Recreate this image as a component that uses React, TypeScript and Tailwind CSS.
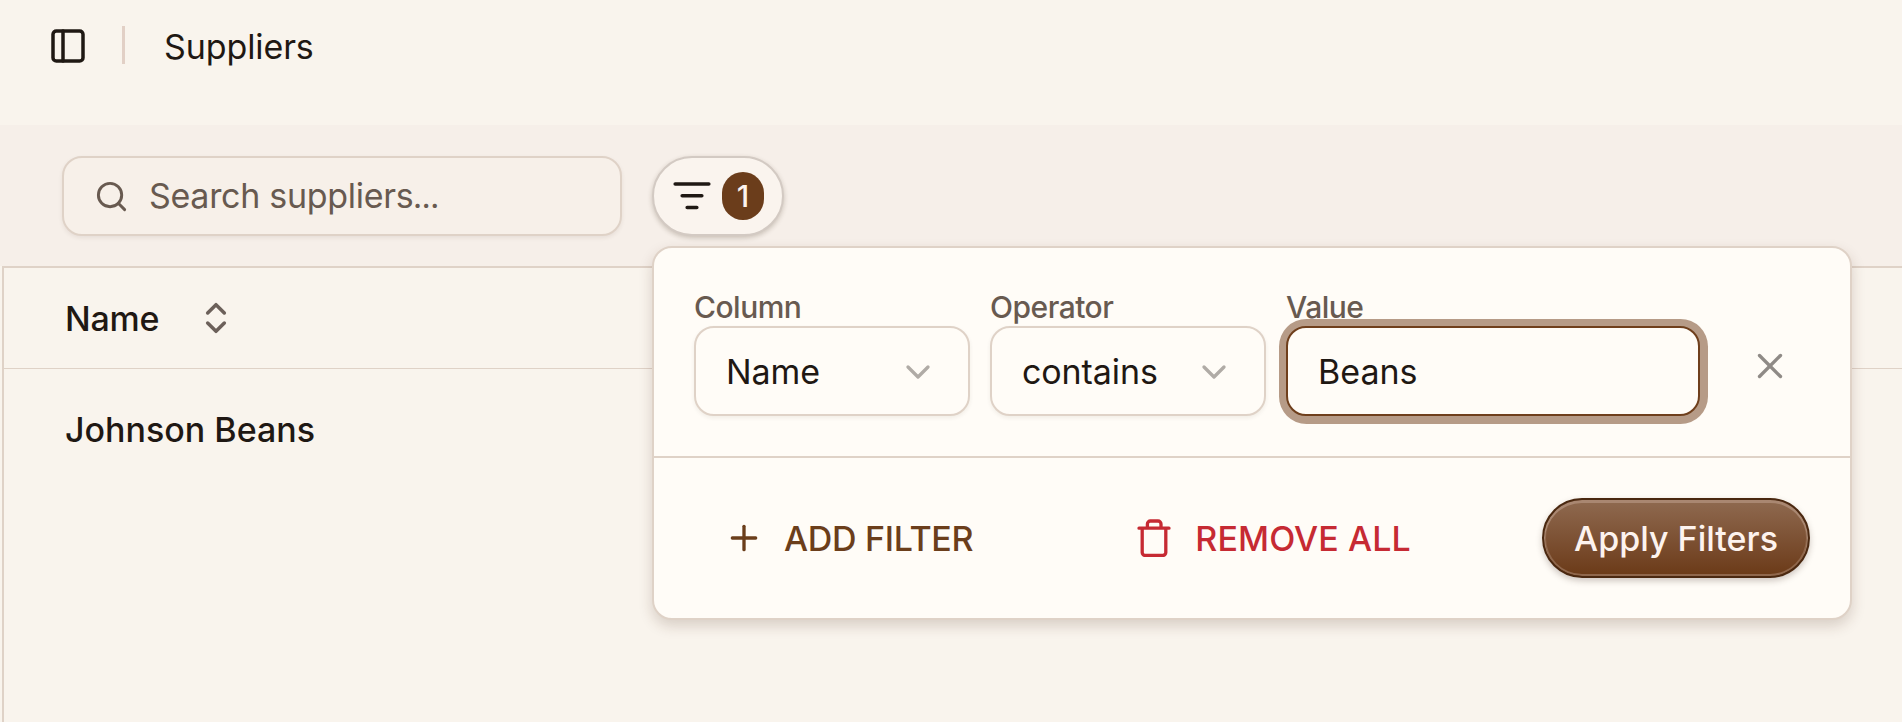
import React from 'react';
import { ChevronDown, ChevronsUpDown, PanelLeft, Plus, Search, X } from 'lucide-react';

const FilterLines: React.FC = () => (
  <svg width="38" height="28" viewBox="0 0 38 28" fill="none" stroke="#1f1813" strokeWidth="3.6" strokeLinecap="round">
    <path d="M2.2 2h33.6M9.2 13.8h19.6M14.2 25.5h9.6" />
  </svg>
);

const TrashIcon: React.FC = () => (
  <svg width="34" height="38" viewBox="0 0 34 38" fill="none" stroke="#c62a33" strokeWidth="3.3" strokeLinecap="round" strokeLinejoin="round">
    <path d="M2 9.2h30M5.2 9.2v24.2a3 3 0 0 0 3 3h17.6a3 3 0 0 0 3-3V9.2M10.4 9.2V5a3 3 0 0 1 3-3h7.6a3 3 0 0 1 3 3v4.2" />
  </svg>
);

const SelectField: React.FC<{ label: string; value: string }> = ({ label, value }) => (
  <div className="w-[276px]">
    <div className="h-10 pt-px text-[30px] leading-10 font-medium tracking-[-0.5px] text-[#685a50]">{label}</div>
    <button className="flex h-[90px] w-full items-center justify-between rounded-[20px] border-2 border-[#dfd2c7] bg-[#fffcf7] pr-[30px] pl-[30px] shadow-[0_2px_4px_rgba(60,40,20,0.07)]">
      <span className="pt-0.5 tracking-[-0.1px]">{value}</span>
      <ChevronDown size={40} strokeWidth={2} className="mt-0.5 text-[#b0aba6]" />
    </button>
  </div>
);

const FilterPanel: React.FC = () => (
  <div className="absolute top-[90px] left-0 z-10 h-[374px] w-[1200px] rounded-[20px] border-2 border-[#dfd2c7] bg-[#fffcf7] shadow-[0_6px_14px_rgba(70,40,20,0.18)]">
    <div className="flex h-[210px] gap-5 border-b-2 border-[#dfd2c7] pt-[38px] pl-10">
      <SelectField label="Column" value="Name" />
      <SelectField label="Operator" value="contains" />
      <div className="w-[414px]">
        <div className="h-10 pt-px text-[30px] leading-10 font-medium tracking-[-0.5px] text-[#685a50]">Value</div>
        <div className="flex h-[90px] items-center rounded-[20px] border-2 border-[#6f3f1c] bg-[#fffcf7] pl-[30px] shadow-[0.5px_0.5px_0_7.5px_#b69b87]">
          <span className="pt-0.5">Beans</span>
        </div>
      </div>
      <button className="mt-[59px] ml-[29px] size-[42px]">
        <X size={42} strokeWidth={1.9} className="text-[#8f8a86]" />
      </button>
    </div>
    <div className="flex h-[160px] items-center pl-[70px] font-medium">
      <button className="flex items-center text-[#6b3e1b]">
        <Plus size={40} strokeWidth={2} />
        <span className="ml-5 pt-0.5 tracking-[-0.3px]">ADD FILTER</span>
      </button>
      <button className="ml-[164px] flex items-center text-[#c62a33]">
        <TrashIcon />
        <span className="ml-6 pt-0.5 tracking-[0.1px]">REMOVE ALL</span>
      </button>
      <button className="mr-10 ml-auto flex h-20 w-[268px] items-center justify-center rounded-full border-2 border-[#4a2810] bg-linear-to-b from-[#8f6a50] to-[#6b3a17] text-[#fdf3ee] shadow-[0_3px_6px_rgba(60,40,30,0.25),inset_0_2px_0_1px_#a98771,inset_0_0_0_2px_#8f674c]">
        <span className="pt-0.5">Apply Filters</span>
      </button>
    </div>
  </div>
);

const App: React.FC = () => {
  return (
    <div className="flex h-[722px] flex-col overflow-hidden bg-[#f9f4ed] font-['Inter','Liberation_Sans',sans-serif] text-[34px] leading-[44px] text-[#1f1813]">
      <header className="flex h-[125px] items-start pl-12">
        <PanelLeft size={40} strokeWidth={2.1} className="mt-[26px]" />
        <div className="mt-[26px] ml-[34px] h-[38px] w-[3px] bg-[#e2d0c6]" />
        <h1 className="mt-[25px] ml-[39px] tracking-[-0.1px]">Suppliers</h1>
      </header>

      <div className="flex h-[141px] items-start gap-[30px] bg-[#f6efe9] pt-[31px] pl-[62px]">
        <div className="flex h-20 w-[560px] items-center rounded-[20px] border-2 border-[#dfd2c7] bg-[#f7f0e9] pl-[30px] text-[#685a50] shadow-[0_2px_4px_rgba(60,40,20,0.08)]">
          <Search size={35} strokeWidth={2} />
          <span className="ml-5 pt-[3px] tracking-[-0.3px]">
            Search suppliers<span className="text-[27px] font-semibold">…</span>
          </span>
        </div>
        <div className="relative">
          <button className="flex h-20 w-[132px] items-center rounded-full border-2 border-[#d3cac3] bg-[#faf4ee] pl-[19px] shadow-[0_2px_5px_rgba(60,40,20,0.24)]">
            <FilterLines />
            <span className="ml-[11px] flex h-12 w-[42px] items-center justify-center rounded-full bg-[#6b3d1b] text-[30px] font-medium text-[#fdf3ee]">1</span>
          </button>
          <FilterPanel />
        </div>
      </div>

      <main className="ml-0.5 flex-1 border-t-2 border-l-2 border-[#dfd2c7] font-medium">
        <div className="flex h-[101px] items-center border-b border-[#dfd2c7] pl-[61px]">
          <span className="pt-0.5 tracking-[-0.2px]">Name</span>
          <ChevronsUpDown size={40} strokeWidth={2.1} className="ml-[37px] text-[#6c605a]" />
        </div>
        <div className="flex h-[122px] items-center pl-[61px]">
          <span>Johnson Beans</span>
        </div>
      </main>
    </div>
  );
};

export default App;
